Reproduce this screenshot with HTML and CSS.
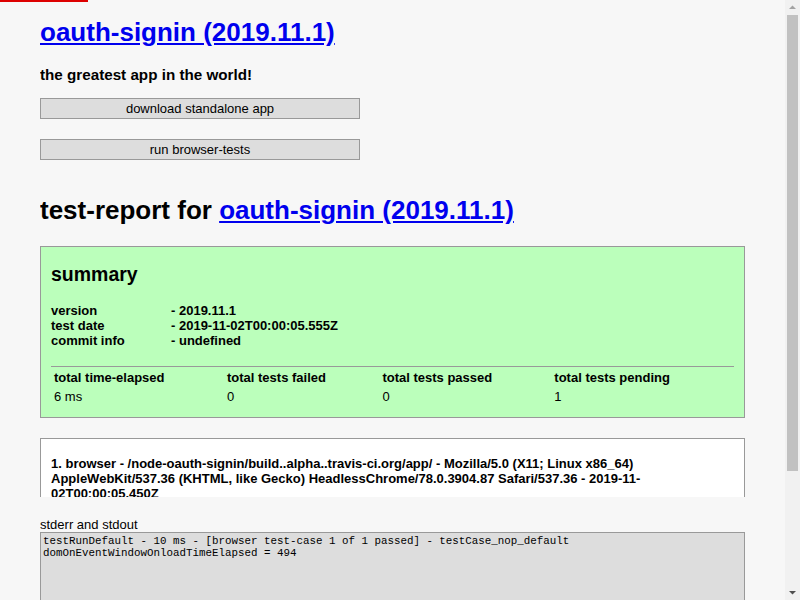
FILE: index.html
```html
<!DOCTYPE html>
<html lang="en">
<head>
<meta charset="utf-8">
<title>oauth-signin (2019.11.1)</title>
<link rel="stylesheet" href="styles.css">
</head>
<body>
<div class="ajax-progress"></div>
<div class="scrollbar" aria-hidden="true">
  <div class="scroll-arrow"><svg width="15" height="15" viewBox="0 0 15 15"><path d="M4 9h7L7.5 5.5z" fill="#a3a3a3"/></svg></div>
  <div class="scroll-track"><div class="scroll-thumb"></div></div>
  <div class="scroll-arrow"><svg width="15" height="15" viewBox="0 0 15 15"><path d="M4 6h7L7.5 9.5z" fill="#505050"/></svg></div>
</div>
<h1 class="app-title"><a href="#">oauth-signin (2019.11.1) </a></h1>
<h3 class="app-desc">the greatest app in the world!</h3>
<a class="button" href="#">download standalone app</a>
<button class="button button-run" type="button">run browser-tests</button>
<div class="report-slide">
  <div class="test-report">
    <h1 class="report-title">test-report for <a href="#">oauth-signin (2019.11.1) </a></h1>
    <div class="platform summary">
      <h2 class="summary-title">summary</h2>
      <h4 class="summary-info">
        <span class="info-key">version</span>- 2019.11.1<br>
        <span class="info-key">test date</span>- 2019-11-02T00:00:05.555Z<br>
        <span class="info-key">commit info</span>- undefined<br>
      </h4>
      <table class="summary-table">
        <thead>
          <tr>
            <th>total time-elapsed</th>
            <th>total tests failed</th>
            <th>total tests passed</th>
            <th>total tests pending</th>
          </tr>
        </thead>
        <tbody>
          <tr>
            <td>6 ms</td>
            <td>0</td>
            <td>0</td>
            <td>1</td>
          </tr>
        </tbody>
      </table>
    </div>
    <div class="platform">
      <h4 class="platform-title">1. browser - /node-oauth-signin/build..alpha..travis-ci.org/app/ - Mozilla/5.0 (X11; Linux x86_64) AppleWebKit/537.36 (KHTML, like Gecko) HeadlessChrome/78.0.3904.87 Safari/537.36 - 2019-11-02T00:00:05.450Z</h4>
      <table class="case-table">
        <thead><tr><th>#</th><th>time-elapsed</th><th>status</th><th>test-case</th></tr></thead>
        <tbody><tr><td>1</td><td>10 ms</td><td>passed</td><td>testCase_nop_default</td></tr></tbody>
      </table>
    </div>
  </div>
</div>
<label class="output-label" for="outputStdout1">stderr and stdout</label>
<textarea class="output" id="outputStdout1" readonly>testRunDefault - 10 ms - [browser test-case 1 of 1 passed] - testCase_nop_default
domOnEventWindowOnloadTimeElapsed = 494</textarea>
</body>
</html>
```
FILE: styles.css
```css
* {
  box-sizing: border-box;
}
html {
  background: #f7f7f7;
}
body {
  margin: 0 55px 0 40px;
  padding: 0 0 16px;
  background: #f7f7f7;
  color: #000;
  font-family: "Liberation Sans", Arial, sans-serif;
  font-size: 13px;
}
a {
  color: #0000ee;
}
.ajax-progress {
  position: fixed;
  top: 0;
  left: 0;
  width: 88px;
  height: 2px;
  background: #dd0000;
  z-index: 2;
}
.scrollbar {
  position: fixed;
  top: 0;
  right: 0;
  width: 15px;
  height: 600px;
  display: flex;
  flex-direction: column;
  background: #f1f1f1;
  z-index: 2;
}
.scroll-arrow {
  height: 15px;
  flex: none;
}
.scroll-arrow svg {
  display: block;
}
.scroll-track {
  flex: 1;
  padding: 0 2px;
}
.scroll-thumb {
  height: 456px;
  background: #c1c1c1;
}
.app-title {
  font-size: 26px;
  margin: 17.42px 0 0;
}
.app-desc {
  font-size: 15.21px;
  margin: 17.42px 0 0;
}
.button {
  display: block;
  width: 320px;
  height: 21px;
  margin: 15px 0 0;
  padding: 2px 5px;
  background: #ddd;
  border: 1px solid #999;
  color: #000;
  font-family: "Liberation Sans", Arial, sans-serif;
  font-size: 13px;
  line-height: 15px;
  text-align: center;
  text-decoration: none;
  cursor: pointer;
}
.button-run {
  margin-top: 20px;
}
.report-slide {
  height: 319px;
  margin-top: 18px;
  overflow: hidden;
}
.report-title {
  font-size: 26px;
  margin: 17.42px 0 19.6px;
}
.platform {
  background: #fff;
  border: 1px solid #999;
  margin-bottom: 20px;
  padding: 0 10px 10px;
}
.summary {
  background: #bfb;
}
.summary-title {
  font-size: 19.5px;
  margin: 16.2px 0 17.29px;
}
.summary-info {
  font-size: 13px;
  margin: 0 0 17.29px;
}
.info-key {
  display: inline-block;
  width: 120px;
}
.summary-table,
.case-table {
  width: 100%;
  border-top: 1px solid #999;
  text-align: left;
  font-size: 13px;
}
.summary-table th,
.summary-table td,
.case-table th,
.case-table td {
  padding: 1px;
}
.platform-title {
  font-size: 13px;
  margin: 17.29px 0;
}
.output-label {
  display: block;
  margin-top: 20px;
  line-height: 15px;
}
.output {
  display: block;
  width: 100%;
  height: 202px;
  margin: 0;
  padding: 2px;
  background: #ddd;
  border: 1px solid #999;
  color: #000;
  font-family: "Liberation Mono", monospace;
  font-size: 10.83px;
  resize: vertical;
}
```
